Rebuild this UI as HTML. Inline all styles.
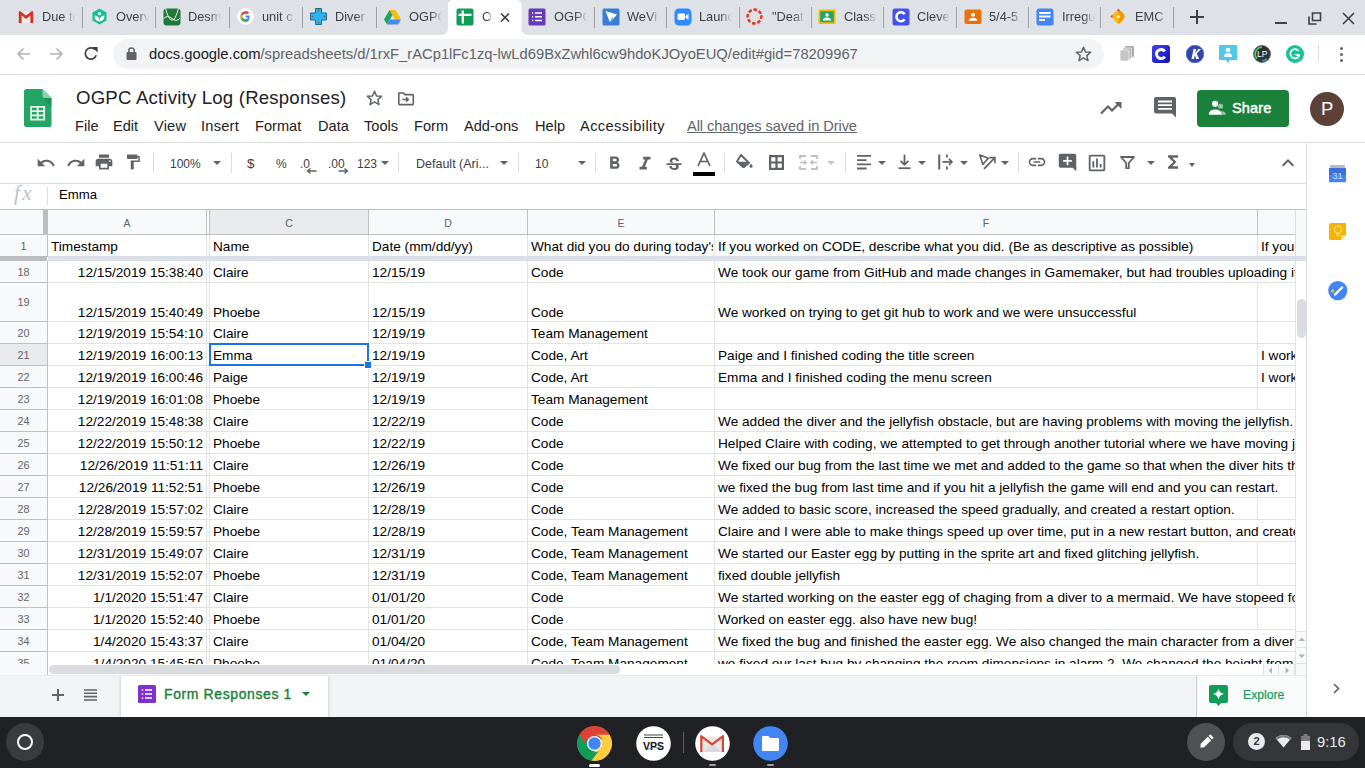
<!DOCTYPE html><html><head><meta charset="utf-8"><style>
html,body{-webkit-font-smoothing:antialiased;margin:0;padding:0;width:1365px;height:768px;overflow:hidden;background:#fff;font-family:"Liberation Sans",sans-serif}
body>div,body div{position:absolute}
svg{position:absolute}
</style></head><body>
<div style="left:0px;top:0px;width:1365px;height:35px;background:#dee1e6"></div>
<svg style="position:absolute;left:437px;top:0" width="95" height="36" viewBox="0 0 95 36"><path d="M3.5 35 Q11 35 11 28 V5.5 Q11 0 16.5 0 H79 Q84.5 0 84.5 5.5 V28 Q84.5 35 92 35 V36 H3.5 Z" fill="#fff"/></svg>
<div style="left:42px;top:8px;font:12.8px 'Liberation Sans',sans-serif;color:#3c4043;white-space:nowrap;width:34px;overflow:hidden;line-height:17px;-webkit-mask-image:linear-gradient(90deg,#000 62%,transparent 98%)">Due to</div>
<div style="left:82px;top:7px;width:1px;height:21px;background:#9aa0a6"></div>
<div style="left:116px;top:8px;font:12.8px 'Liberation Sans',sans-serif;color:#3c4043;white-space:nowrap;width:34px;overflow:hidden;line-height:17px;-webkit-mask-image:linear-gradient(90deg,#000 62%,transparent 98%)">Overv</div>
<div style="left:155px;top:7px;width:1px;height:21px;background:#9aa0a6"></div>
<div style="left:188px;top:8px;font:12.8px 'Liberation Sans',sans-serif;color:#3c4043;white-space:nowrap;width:34px;overflow:hidden;line-height:17px;-webkit-mask-image:linear-gradient(90deg,#000 62%,transparent 98%)">Desm</div>
<div style="left:229px;top:7px;width:1px;height:21px;background:#9aa0a6"></div>
<div style="left:262px;top:8px;font:12.8px 'Liberation Sans',sans-serif;color:#3c4043;white-space:nowrap;width:34px;overflow:hidden;line-height:17px;-webkit-mask-image:linear-gradient(90deg,#000 62%,transparent 98%)">unit c</div>
<div style="left:302px;top:7px;width:1px;height:21px;background:#9aa0a6"></div>
<div style="left:335px;top:8px;font:12.8px 'Liberation Sans',sans-serif;color:#3c4043;white-space:nowrap;width:34px;overflow:hidden;line-height:17px;-webkit-mask-image:linear-gradient(90deg,#000 62%,transparent 98%)">Diver</div>
<div style="left:376px;top:7px;width:1px;height:21px;background:#9aa0a6"></div>
<div style="left:409px;top:8px;font:12.8px 'Liberation Sans',sans-serif;color:#3c4043;white-space:nowrap;width:34px;overflow:hidden;line-height:17px;-webkit-mask-image:linear-gradient(90deg,#000 62%,transparent 98%)">OGPC</div>
<div style="left:554px;top:8px;font:12.8px 'Liberation Sans',sans-serif;color:#3c4043;white-space:nowrap;width:34px;overflow:hidden;line-height:17px;-webkit-mask-image:linear-gradient(90deg,#000 62%,transparent 98%)">OGPC</div>
<div style="left:594px;top:7px;width:1px;height:21px;background:#9aa0a6"></div>
<div style="left:627px;top:8px;font:12.8px 'Liberation Sans',sans-serif;color:#3c4043;white-space:nowrap;width:34px;overflow:hidden;line-height:17px;-webkit-mask-image:linear-gradient(90deg,#000 62%,transparent 98%)">WeVi</div>
<div style="left:666px;top:7px;width:1px;height:21px;background:#9aa0a6"></div>
<div style="left:699px;top:8px;font:12.8px 'Liberation Sans',sans-serif;color:#3c4043;white-space:nowrap;width:34px;overflow:hidden;line-height:17px;-webkit-mask-image:linear-gradient(90deg,#000 62%,transparent 98%)">Launc</div>
<div style="left:739px;top:7px;width:1px;height:21px;background:#9aa0a6"></div>
<div style="left:772px;top:8px;font:12.8px 'Liberation Sans',sans-serif;color:#3c4043;white-space:nowrap;width:34px;overflow:hidden;line-height:17px;-webkit-mask-image:linear-gradient(90deg,#000 62%,transparent 98%)">&quot;Deat</div>
<div style="left:811px;top:7px;width:1px;height:21px;background:#9aa0a6"></div>
<div style="left:844px;top:8px;font:12.8px 'Liberation Sans',sans-serif;color:#3c4043;white-space:nowrap;width:34px;overflow:hidden;line-height:17px;-webkit-mask-image:linear-gradient(90deg,#000 62%,transparent 98%)">Class</div>
<div style="left:883px;top:7px;width:1px;height:21px;background:#9aa0a6"></div>
<div style="left:917px;top:8px;font:12.8px 'Liberation Sans',sans-serif;color:#3c4043;white-space:nowrap;width:34px;overflow:hidden;line-height:17px;-webkit-mask-image:linear-gradient(90deg,#000 62%,transparent 98%)">Cleve</div>
<div style="left:956px;top:7px;width:1px;height:21px;background:#9aa0a6"></div>
<div style="left:989px;top:8px;font:12.8px 'Liberation Sans',sans-serif;color:#3c4043;white-space:nowrap;width:34px;overflow:hidden;line-height:17px;-webkit-mask-image:linear-gradient(90deg,#000 62%,transparent 98%)">5/4-5</div>
<div style="left:1028px;top:7px;width:1px;height:21px;background:#9aa0a6"></div>
<div style="left:1062px;top:8px;font:12.8px 'Liberation Sans',sans-serif;color:#3c4043;white-space:nowrap;width:34px;overflow:hidden;line-height:17px;-webkit-mask-image:linear-gradient(90deg,#000 62%,transparent 98%)">Irregu</div>
<div style="left:1100px;top:7px;width:1px;height:21px;background:#9aa0a6"></div>
<div style="left:1135px;top:8px;font:12.8px 'Liberation Sans',sans-serif;color:#3c4043;white-space:nowrap;width:34px;overflow:hidden;line-height:17px;-webkit-mask-image:linear-gradient(90deg,#000 62%,transparent 98%)">EMC</div>
<div style="left:1173px;top:7px;width:1px;height:21px;background:#9aa0a6"></div>
<svg style="position:absolute;left:18px;top:10px" width="18" height="18" viewBox="0 0 18 18"><path d="M1.5 2 H14.5 V13 H1.5 Z" fill="#eeeeee"/><path d="M0.8 2.3 Q0.8 1 2 1 L8 5.6 L14 1 Q15.2 1 15.2 2.3 V13 H12.4 V5.6 L8 8.9 L3.6 5.6 V13 H0.8 Z" fill="#d93025"/></svg>
<svg style="position:absolute;left:91px;top:8px" width="18" height="18" viewBox="0 0 18 18"><path d="M8.5 0.5 L15.5 4.5 V12.5 L8.5 16.5 L1.5 12.5 V4.5 Z" fill="#14bf96"/><circle cx="8.5" cy="5.6" r="1.6" fill="#fff"/><path d="M3.6 7.6 Q8.4 8 8.5 13.2 Q8.6 8 13.4 7.6 Q13.6 13 8.5 13.6 Q3.4 13 3.6 7.6 Z" fill="#fff"/></svg>
<svg style="position:absolute;left:163px;top:8px" width="18" height="18" viewBox="0 0 18 18"><rect x="0.5" y="0.5" width="17" height="17" rx="3" fill="#1f7a36"/><path d="M2.5 0.5 Q9 24 15.5 0.5" fill="none" stroke="#fff" stroke-width="0.9"/><path d="M0.8 10.5 Q4.5 6.5 9 10.5 Q13.5 14.5 17.2 10" fill="none" stroke="#fff" stroke-width="0.9"/></svg>
<svg style="position:absolute;left:237px;top:8px" width="18" height="18" viewBox="0 0 18 18"><circle cx="8.5" cy="8.5" r="8.3" fill="#fff"/><path d="M12.6 7.4 H8.6 V9.6 H10.9 Q10.4 11.5 8.5 11.6 A3.1 3.1 0 1 1 10.5 6.1 L12 4.6 A5.2 5.2 0 1 0 8.5 13.7 Q13.2 13.7 12.6 7.4 Z" fill="#4285f4"/><path d="M3.9 6.2 A5.2 5.2 0 0 1 12 4.6 L10.5 6.1 A3.1 3.1 0 0 0 5.7 7.3 Z" fill="#ea4335"/><path d="M3.9 6.2 L5.7 7.3 A3.1 3.1 0 0 0 5.7 9.7 L3.9 10.9 A5.2 5.2 0 0 1 3.9 6.2 Z" fill="#fbbc05"/><path d="M3.9 10.9 L5.7 9.7 A3.1 3.1 0 0 0 10.2 11.2 L11.8 12.5 A5.2 5.2 0 0 1 3.9 10.9 Z" fill="#34a853"/></svg>
<svg style="position:absolute;left:310px;top:8px" width="18" height="18" viewBox="0 0 18 18"><path d="M5.5 0.5 H11.5 V5 H16.5 V12 H11.5 V16.5 H5.5 V12 H0.5 V5 H5.5 Z" fill="#29b6f6" stroke="#0d6ea8" stroke-width="1"/><circle cx="8.5" cy="2.5" r="0.9" fill="#a0522d"/><circle cx="8.5" cy="14.5" r="0.9" fill="#a0522d"/><circle cx="2.5" cy="8.5" r="0.9" fill="#a0522d"/><circle cx="14.5" cy="8.5" r="0.9" fill="#a0522d"/></svg>
<svg style="position:absolute;left:384px;top:9px" width="18" height="18" viewBox="0 0 18 18"><path d="M5.5 1 H11.5 L17 10.5 H11 Z" fill="#fbbc04"/><path d="M5.5 1 L0 10.5 L3 15.5 L8.5 6 Z" fill="#1ea362"/><path d="M3 15.5 H14 L17 10.5 H6 Z" fill="#4688f4"/></svg>
<svg style="position:absolute;left:456px;top:8px" width="18" height="18" viewBox="0 0 18 18"><rect x="0.5" y="0.5" width="17" height="17" rx="2" fill="#0f9d58"/><path d="M2.5 6.8 H15.5 M6.8 2.5 V15.5" stroke="#fff" stroke-width="2.3"/></svg>
<svg style="position:absolute;left:528px;top:8px" width="18" height="18" viewBox="0 0 18 18"><rect x="0.5" y="0.5" width="17" height="17" rx="1.5" fill="#673ab7"/><path d="M7 5 H14 M7 8.7 H14 M7 12.4 H14" stroke="#fff" stroke-width="1.5"/><path d="M4 5 H5.2 M4 8.7 H5.2 M4 12.4 H5.2" stroke="#fff" stroke-width="1.5"/></svg>
<svg style="position:absolute;left:602px;top:8px" width="18" height="18" viewBox="0 0 18 18"><rect x="0.5" y="0.5" width="17" height="17" rx="1.5" fill="#3a7dd6"/><path d="M3.5 3 L15 6.5 L8 14.5 Z" fill="#fff"/><path d="M8 14.5 L11 9" stroke="#3a7dd6" stroke-width="0.8"/></svg>
<svg style="position:absolute;left:674px;top:8px" width="18" height="18" viewBox="0 0 18 18"><rect x="0.5" y="0.5" width="17" height="17" rx="4.5" fill="#2d8cff"/><rect x="3.5" y="5.5" width="7.5" height="6.5" rx="1.4" fill="#fff"/><path d="M11.5 8 L14.5 5.6 V12 L11.5 9.6 Z" fill="#fff"/></svg>
<svg style="position:absolute;left:746px;top:8px" width="18" height="18" viewBox="0 0 18 18"><circle cx="8.5" cy="8.5" r="6.9" fill="none" stroke="#ea3323" stroke-width="2.5" stroke-dasharray="3.6 1.82" transform="rotate(-10 8.5 8.5)"/></svg>
<svg style="position:absolute;left:818px;top:8px" width="18" height="18" viewBox="0 0 18 18"><rect x="0.5" y="1.5" width="17" height="14.5" rx="1" fill="#f9bb04"/><rect x="2.2" y="3.2" width="13.6" height="11" fill="#23a566"/><circle cx="9" cy="7" r="1.8" fill="#fff"/><path d="M4.8 12.5 Q5 9.6 9 9.6 Q13 9.6 13.2 12.5 Z" fill="#fff"/></svg>
<svg style="position:absolute;left:892px;top:8px" width="18" height="18" viewBox="0 0 18 18"><rect x="0.5" y="0.5" width="17" height="17" rx="2.5" fill="#4352ee"/><path d="M12.6 6.2 A4.5 4.5 0 1 0 12.6 11.3" fill="none" stroke="#fff" stroke-width="2.6"/></svg>
<svg style="position:absolute;left:964px;top:8px" width="18" height="18" viewBox="0 0 18 18"><rect x="0.5" y="1.5" width="17" height="14.5" rx="2" fill="#e8710a"/><circle cx="9" cy="6.7" r="2" fill="#fff"/><path d="M4.6 12.8 Q5 9.8 9 9.8 Q13 9.8 13.4 12.8 Z" fill="#fff"/></svg>
<svg style="position:absolute;left:1036px;top:8px" width="18" height="18" viewBox="0 0 18 18"><rect x="0.5" y="0.5" width="17" height="17" rx="2.5" fill="#4285f4"/><path d="M3 5 H14.5 M3 8.5 H14.5 M3 12 H9" stroke="#fff" stroke-width="1.8"/></svg>
<svg style="position:absolute;left:1110px;top:8px" width="18" height="18" viewBox="0 0 18 18"><path d="M8.5 2.7 A5.9 5.9 0 0 1 14.4 8.6 Q14.4 12 8.5 16 Q2.6 12 2.6 8.6 A5.9 5.9 0 0 1 8.5 2.7 Z" fill="#fbbc04"/><path d="M8.5 2.7 A5.9 5.9 0 0 1 14.4 8.6 Q14.4 12 8.5 16 Z" fill="#f29900"/><circle cx="8.5" cy="8.6" r="1.7" fill="#e8eaed"/><path d="M6.8 3 L8.5 0.6 L10.2 3 Z" fill="#ea4335"/><path d="M2.6 6.6 L0.3 8.4 L2.6 10.2 Z" fill="#ea4335"/></svg>
<div style="left:482px;top:8px;font:12.8px 'Liberation Sans',sans-serif;color:#3c4043;white-space:nowrap;width:10px;overflow:hidden;line-height:17px;-webkit-mask-image:linear-gradient(90deg,#000 55%,transparent)">OGPC</div>
<svg style="position:absolute;left:500px;top:13px" width="10" height="9" viewBox="0 0 10 9"><path d="M1 0.5 L9 8.5 M9 0.5 L1 8.5" stroke="#3c4043" stroke-width="1.6"/></svg>
<svg style="position:absolute;left:1190px;top:10px" width="14" height="14" viewBox="0 0 14 14"><path d="M7 0 V14 M0 7 H14" stroke="#3c4043" stroke-width="2"/></svg>
<div style="left:1275px;top:22px;width:12px;height:2px;background:#3c4043"></div>
<svg style="position:absolute;left:1308px;top:12px" width="14" height="13" viewBox="0 0 14 13"><path d="M4.5 1 H12.5 V8.5 H4.5 Z M1 4.5 V12 H8.5" fill="none" stroke="#3c4043" stroke-width="1.6"/></svg>
<svg style="position:absolute;left:1342px;top:12px" width="13" height="13" viewBox="0 0 13 13"><path d="M1 1 L12 12 M12 1 L1 12" stroke="#3c4043" stroke-width="1.6"/></svg>
<div style="left:0px;top:35px;width:1365px;height:40px;background:#fff"></div>
<div style="left:0px;top:74px;width:1365px;height:1px;background:#dadce0"></div>
<div style="left:113px;top:39px;width:991px;height:30px;background:#f1f3f4;border-radius:15px"></div>
<svg style="position:absolute;left:16px;top:47px" width="15" height="14" viewBox="0 0 15 14"><path d="M14 7 H2 M7.5 1.5 L2 7 L7.5 12.5" fill="none" stroke="#b1b3b6" stroke-width="1.7"/></svg>
<svg style="position:absolute;left:49px;top:47px" width="15" height="14" viewBox="0 0 15 14"><path d="M1 7 H13 M7.5 1.5 L13 7 L7.5 12.5" fill="none" stroke="#b1b3b6" stroke-width="1.7"/></svg>
<svg style="position:absolute;left:83px;top:46px" width="16" height="16" viewBox="0 0 16 16"><path d="M13.2 9.2 A5.6 5.6 0 1 1 11.9 3.6" fill="none" stroke="#3c4043" stroke-width="1.7"/><path d="M9.2 1 H14.6 V6.4 Z" fill="#3c4043"/></svg>
<svg style="position:absolute;left:126px;top:47px" width="11" height="13" viewBox="0 0 11 13"><rect x="0.5" y="5" width="10" height="8" rx="1" fill="#5f6368"/><path d="M2.8 5.5 V3.8 A2.7 2.7 0 0 1 8.2 3.8 V5.5" fill="none" stroke="#5f6368" stroke-width="1.5"/></svg>
<div style="left:149px;top:46px;font:14.75px 'Liberation Sans',sans-serif;color:#202124;white-space:nowrap;line-height:17px">docs.google.com<span style="color:#5f6368">/spreadsheets/d/1rxF_rACp1lFc1zq-lwLd69BxZwhl6cw9hdoKJOyoEUQ/edit#gid=78209967</span></div>
<svg style="position:absolute;left:1075px;top:46px" width="17" height="16" viewBox="0 0 17 16"><path d="M8.5 1.3 L10.6 6 L15.7 6.3 L11.8 9.6 L13 14.6 L8.5 11.9 L4 14.6 L5.2 9.6 L1.3 6.3 L6.4 6 Z" fill="none" stroke="#5f6368" stroke-width="1.5" stroke-linejoin="round"/></svg>
<svg style="position:absolute;left:1119px;top:45px" width="17" height="17" viewBox="0 0 17 17"><rect x="6" y="1" width="9" height="11" rx="1" fill="#a8a8a8"/><rect x="3.5" y="3" width="9" height="11" rx="1" fill="#b8b8b8" stroke="#fff" stroke-width="0.6"/><rect x="1" y="5" width="9" height="11" rx="1" fill="#c6c6c6" stroke="#fff" stroke-width="0.6"/></svg>
<svg style="position:absolute;left:1152px;top:45px" width="18" height="18" viewBox="0 0 18 18"><defs><linearGradient id="gc" x1="0" y1="0" x2="1" y2="1"><stop offset="0" stop-color="#4343f0"/><stop offset="1" stop-color="#1010b8"/></linearGradient></defs><rect x="0" y="0" width="18" height="18" rx="3" fill="url(#gc)"/><path d="M12.8 6.3 A4.6 4.6 0 1 0 12.8 11.7" fill="none" stroke="#fff" stroke-width="3"/></svg>
<svg style="position:absolute;left:1186px;top:45px" width="18" height="18" viewBox="0 0 18 18"><circle cx="9" cy="9" r="8.8" fill="#3446a8"/><circle cx="9" cy="9" r="8.8" fill="none" stroke="#5566c8" stroke-width="0.8"/><path d="M5.5 14 L7.6 4 H10 L9.2 8 L12.4 4 H15 L10.8 8.6 L13 14 H10.3 L8.8 10.2 L8 14 Z" fill="#fff"/></svg>
<svg style="position:absolute;left:1219px;top:45px" width="18" height="19" viewBox="0 0 18 19"><path d="M1 0 H17 Q18 0 18 1 V14 Q18 15 17 15 H11 L9 18 L7 15 H1 Q0 15 0 14 V1 Q0 0 1 0 Z" fill="#4fc8ea"/><circle cx="9" cy="5" r="2.3" fill="#fff"/><path d="M5 12 Q5 8 9 8 Q13 8 13 12 Z" fill="#fff"/></svg>
<svg style="position:absolute;left:1253px;top:45px" width="18" height="18" viewBox="0 0 18 18"><circle cx="9" cy="9" r="8.5" fill="#2f3336" stroke="#5f6368" stroke-width="0.8"/><path d="M9 2.2 A6.8 6.8 0 0 0 4.2 13.8" fill="none" stroke="#3ddc5c" stroke-width="1.6"/><path d="M13.8 13.8 A6.8 6.8 0 0 1 9 15.8" fill="none" stroke="#2a9fd6" stroke-width="1.6"/><text x="9.3" y="12.2" font-family="Liberation Sans" font-size="8.5" fill="#fff" text-anchor="middle">LP</text></svg>
<svg style="position:absolute;left:1286px;top:45px" width="18" height="18" viewBox="0 0 18 18"><circle cx="9" cy="9" r="9" fill="#15c39a"/><path d="M12.6 6 A4.6 4.6 0 1 0 13 11 L11 9.8 H13.6" fill="none" stroke="#fff" stroke-width="1.7"/></svg>
<div style="left:1318px;top:45px;width:1px;height:17px;background:#dadce0"></div>
<div style="left:1340px;top:47px;width:3px;height:3px;background:#5f6368;border-radius:50%"></div>
<div style="left:1340px;top:53px;width:3px;height:3px;background:#5f6368;border-radius:50%"></div>
<div style="left:1340px;top:59px;width:3px;height:3px;background:#5f6368;border-radius:50%"></div>
<div style="left:0px;top:75px;width:1365px;height:68px;background:#fff"></div>
<div style="left:0px;top:142px;width:1365px;height:1px;background:#dadce0"></div>
<div style="left:76px;top:87px;font:18.6px 'Liberation Sans',sans-serif;color:#202124;white-space:nowrap;line-height:22px;letter-spacing:0.2px">OGPC Activity Log (Responses)</div>
<div style="left:75px;top:118px;font:14.6px 'Liberation Sans',sans-serif;color:#202124;white-space:nowrap;line-height:17px;letter-spacing:0px">File</div>
<div style="left:113px;top:118px;font:14.6px 'Liberation Sans',sans-serif;color:#202124;white-space:nowrap;line-height:17px;letter-spacing:0px">Edit</div>
<div style="left:154px;top:118px;font:14.6px 'Liberation Sans',sans-serif;color:#202124;white-space:nowrap;line-height:17px;letter-spacing:0.2px">View</div>
<div style="left:201px;top:118px;font:14.6px 'Liberation Sans',sans-serif;color:#202124;white-space:nowrap;line-height:17px;letter-spacing:0.25px">Insert</div>
<div style="left:255px;top:118px;font:14.6px 'Liberation Sans',sans-serif;color:#202124;white-space:nowrap;line-height:17px;letter-spacing:0px">Format</div>
<div style="left:318px;top:118px;font:14.6px 'Liberation Sans',sans-serif;color:#202124;white-space:nowrap;line-height:17px;letter-spacing:0px">Data</div>
<div style="left:364px;top:118px;font:14.6px 'Liberation Sans',sans-serif;color:#202124;white-space:nowrap;line-height:17px;letter-spacing:0px">Tools</div>
<div style="left:414px;top:118px;font:14.6px 'Liberation Sans',sans-serif;color:#202124;white-space:nowrap;line-height:17px;letter-spacing:0px">Form</div>
<div style="left:464px;top:118px;font:14.6px 'Liberation Sans',sans-serif;color:#202124;white-space:nowrap;line-height:17px;letter-spacing:0px">Add-ons</div>
<div style="left:535px;top:118px;font:14.6px 'Liberation Sans',sans-serif;color:#202124;white-space:nowrap;line-height:17px;letter-spacing:0px">Help</div>
<div style="left:580px;top:118px;font:14.6px 'Liberation Sans',sans-serif;color:#202124;white-space:nowrap;line-height:17px;letter-spacing:0.42px">Accessibility</div>
<div style="left:687px;top:118px;font:14.6px 'Liberation Sans',sans-serif;color:#5f6368;white-space:nowrap;line-height:17px;text-decoration:underline;letter-spacing:-0.08px">All changes saved in Drive</div>
<div style="left:1197px;top:90px;width:92px;height:37px;background:#1a803a;border-radius:4px"></div>
<div style="left:1232px;top:100px;font:14.6px 'Liberation Sans',sans-serif;color:#fff;white-space:nowrap;line-height:17px;-webkit-text-stroke:0.45px #fff;letter-spacing:0.1px">Share</div>
<div style="left:1310px;top:92px;width:34px;height:34px;background:#5d4037;border-radius:50%"></div>
<div style="left:1321px;top:99px;font:18.5px 'Liberation Sans',sans-serif;color:#fff;line-height:20px">P</div>
<div style="left:0px;top:143px;width:1306px;height:40px;background:#fff"></div>
<div style="left:0px;top:183px;width:1306px;height:1px;background:#dadce0"></div>
<div style="left:153px;top:153px;width:1px;height:20px;background:#dadce0"></div>
<div style="left:231px;top:153px;width:1px;height:20px;background:#dadce0"></div>
<div style="left:398px;top:153px;width:1px;height:20px;background:#dadce0"></div>
<div style="left:518px;top:153px;width:1px;height:20px;background:#dadce0"></div>
<div style="left:595px;top:153px;width:1px;height:20px;background:#dadce0"></div>
<div style="left:724px;top:153px;width:1px;height:20px;background:#dadce0"></div>
<div style="left:845px;top:153px;width:1px;height:20px;background:#dadce0"></div>
<div style="left:1018px;top:153px;width:1px;height:20px;background:#dadce0"></div>
<div style="left:170px;top:156px;font:12px 'Liberation Sans',sans-serif;color:#3c4043;line-height:16px">100%</div>
<div style="left:247px;top:156px;font:13.5px 'Liberation Sans',sans-serif;color:#3c4043;line-height:16px">$</div>
<div style="left:276px;top:156px;font:12px 'Liberation Sans',sans-serif;color:#3c4043;line-height:16px">%</div>
<div style="left:300px;top:156px;font:12px 'Liberation Sans',sans-serif;color:#3c4043;line-height:16px">.0</div>
<div style="left:328px;top:156px;font:12px 'Liberation Sans',sans-serif;color:#3c4043;line-height:16px">.00</div>
<div style="left:357px;top:156px;font:12px 'Liberation Sans',sans-serif;color:#3c4043;line-height:16px">123</div>
<div style="left:416px;top:156px;font:12.5px 'Liberation Sans',sans-serif;color:#3c4043;line-height:16px">Default (Ari...</div>
<div style="left:535px;top:156px;font:12px 'Liberation Sans',sans-serif;color:#3c4043;line-height:16px">10</div>
<svg style="position:absolute;left:213px;top:161px" width="8" height="4" viewBox="0 0 8 4"><path d="M0 0 H8 L4.0 4 Z" fill="#5f6368"/></svg>
<svg style="position:absolute;left:381px;top:161px" width="8" height="4" viewBox="0 0 8 4"><path d="M0 0 H8 L4.0 4 Z" fill="#5f6368"/></svg>
<svg style="position:absolute;left:500px;top:161px" width="8" height="4" viewBox="0 0 8 4"><path d="M0 0 H8 L4.0 4 Z" fill="#5f6368"/></svg>
<svg style="position:absolute;left:578px;top:161px" width="8" height="4" viewBox="0 0 8 4"><path d="M0 0 H8 L4.0 4 Z" fill="#5f6368"/></svg>
<svg style="position:absolute;left:878px;top:161px" width="8" height="4" viewBox="0 0 8 4"><path d="M0 0 H8 L4.0 4 Z" fill="#5f6368"/></svg>
<svg style="position:absolute;left:918px;top:161px" width="8" height="4" viewBox="0 0 8 4"><path d="M0 0 H8 L4.0 4 Z" fill="#5f6368"/></svg>
<svg style="position:absolute;left:960px;top:161px" width="8" height="4" viewBox="0 0 8 4"><path d="M0 0 H8 L4.0 4 Z" fill="#5f6368"/></svg>
<svg style="position:absolute;left:1001px;top:161px" width="8" height="4" viewBox="0 0 8 4"><path d="M0 0 H8 L4.0 4 Z" fill="#5f6368"/></svg>
<svg style="position:absolute;left:1147px;top:161px" width="8" height="4" viewBox="0 0 8 4"><path d="M0 0 H8 L4.0 4 Z" fill="#5f6368"/></svg>
<svg style="position:absolute;left:827px;top:161px" width="8" height="4" viewBox="0 0 8 4"><path d="M0 0 H8 L4.0 4 Z" fill="#c4c7c5"/></svg>
<svg style="position:absolute;left:1189px;top:163px" width="6" height="4" viewBox="0 0 6 4"><path d="M0 0 H6 L3.0 4 Z" fill="#5f6368"/></svg>
<svg style="position:absolute;left:24px;top:89px" width="28" height="38" viewBox="0 0 28 38"><path d="M2.5 0 H18.5 L27.5 9 V35.5 Q27.5 38 25 38 H2.5 Q0 38 0 35.5 V2.5 Q0 0 2.5 0 Z" fill="#23a566"/><path d="M18.5 0 L27.5 9 H20.5 Q18.5 9 18.5 7 Z" fill="#8ed1b1"/><path d="M18.5 9 L27.5 18 V9 Z" fill="#1c8b55" opacity="0.6"/><path d="M6.2 17 H21.1 V31.5 H6.2 Z M8 18.8 V21.2 H12.75 V18.8 Z M14.55 18.8 V21.2 H19.3 V18.8 Z M8 23 V25.4 H12.75 V23 Z M14.55 23 V25.4 H19.3 V23 Z M8 27.2 V29.7 H12.75 V27.2 Z M14.55 27.2 V29.7 H19.3 V27.2 Z" fill="#f1f1f1" fill-rule="evenodd"/></svg>
<svg style="position:absolute;left:366px;top:90px" width="17" height="16" viewBox="0 0 17 16"><path d="M8.5 1.3 L10.6 6 L15.7 6.3 L11.8 9.6 L13 14.6 L8.5 11.9 L4 14.6 L5.2 9.6 L1.3 6.3 L6.4 6 Z" fill="none" stroke="#5f6368" stroke-width="1.5" stroke-linejoin="round"/></svg>
<svg style="position:absolute;left:397px;top:91px" width="18" height="15" viewBox="0 0 18 15"><path d="M1.8 2 H6.5 L8 3.6 H15.5 Q16.3 3.6 16.3 4.4 V12.8 Q16.3 13.6 15.5 13.6 H2.6 Q1.8 13.6 1.8 12.8 Z" fill="none" stroke="#5f6368" stroke-width="1.6"/><path d="M5.5 8.6 H11 M9 6.4 L11.3 8.6 L9 10.8" fill="none" stroke="#5f6368" stroke-width="1.5"/></svg>
<svg style="position:absolute;left:1100px;top:101px" width="23" height="14" viewBox="0 0 23 14"><path d="M1 12.5 L8 5.5 L12 9.5 L19.5 2" fill="none" stroke="#5f6368" stroke-width="2.2"/><path d="M14.5 1 H21.5 V8 Z" fill="#5f6368"/></svg>
<svg style="position:absolute;left:1154px;top:97px" width="22" height="21" viewBox="0 0 22 21"><path d="M2 0 H20 Q22 0 22 2 V20.5 L18 16.5 H2 Q0 16.5 0 14.5 V2 Q0 0 2 0 Z" fill="#5f6368"/><path d="M4 4.5 H18 M4 8.2 H18 M4 11.9 H18" stroke="#fff" stroke-width="1.8"/></svg>
<svg style="position:absolute;left:1207px;top:100px" width="20" height="16" viewBox="0 0 20 16"><circle cx="13.6" cy="6.3" r="2.5" fill="#fff" opacity="0.55"/><path d="M12 11 Q18.8 10.8 19.2 14.8 H13.5 Z" fill="#fff" opacity="0.55"/><circle cx="8.1" cy="3.8" r="3.1" fill="#fff"/><path d="M1.8 14.8 Q1.8 9.4 8.1 9.4 Q14.4 9.4 14.4 14.8 Z" fill="#fff"/></svg>
<svg style="position:absolute;left:36px;top:153px" width="20" height="20" viewBox="0 0 24 24"><path d="M12.5 8c-2.65 0-5.05.99-6.9 2.6L2 7v9h9l-3.62-3.62c1.39-1.16 3.16-1.88 5.12-1.88 3.54 0 6.55 2.31 7.6 5.5l2.37-.78C21.08 11.03 17.15 8 12.5 8z" fill="#5f6368"/></svg>
<svg style="position:absolute;left:66px;top:153px" width="20" height="20" viewBox="0 0 24 24"><path d="M18.4 10.6C16.55 8.99 14.15 8 11.5 8c-4.65 0-8.58 3.03-9.96 7.22L3.9 16c1.05-3.19 4.05-5.5 7.6-5.5 1.95 0 3.73.72 5.12 1.88L13 16h9V7l-3.6 3.6z" fill="#5f6368"/></svg>
<svg style="position:absolute;left:94px;top:152px" width="20" height="20" viewBox="0 0 24 24"><path d="M19 8H5c-1.66 0-3 1.34-3 3v6h4v4h12v-4h4v-6c0-1.66-1.34-3-3-3zm-3 11H8v-5h8v5zm3-7c-.55 0-1-.45-1-1s.45-1 1-1 1 .45 1 1-.45 1-1 1zm-1-9H6v4h12V3z" fill="#5f6368"/></svg>
<svg style="position:absolute;left:124px;top:153px" width="18" height="18" viewBox="0 0 24 24"><path d="M18 4V3c0-.55-.45-1-1-1H5c-.55 0-1 .45-1 1v4c0 .55.45 1 1 1h12c.55 0 1-.45 1-1V6h1v4H9v11c0 .55.45 1 1 1h2c.55 0 1-.45 1-1v-9h8V4h-3z" fill="#5f6368"/></svg>
<svg style="position:absolute;left:604px;top:153px" width="21" height="21" viewBox="0 0 24 24"><path d="M15.6 10.79c.97-.67 1.65-1.77 1.65-2.79 0-2.26-1.75-4-4-4H7v14h7.04c2.09 0 3.71-1.7 3.71-3.79 0-1.52-.86-2.82-2.15-3.42zM10 6.5h3c.83 0 1.5.67 1.5 1.5s-.67 1.5-1.5 1.5h-3v-3zm3.5 9H10v-3h3.5c.83 0 1.5.67 1.5 1.5s-.67 1.5-1.5 1.5z" fill="#5f6368"/></svg>
<svg style="position:absolute;left:634px;top:153px" width="22" height="22" viewBox="0 0 24 24"><path d="M10 4v3h2.21l-3.42 8H6v3h8v-3h-2.21l3.42-8H18V4z" fill="#5f6368"/></svg>
<svg style="position:absolute;left:664px;top:155px" width="20" height="20" viewBox="0 0 24 24"><path d="M6.85 7.08C6.85 4.37 9.45 3 12.24 3c1.64 0 3 .49 3.9 1.28.77.65 1.46 1.73 1.46 3.24h-3.01c0-.31-.05-.59-.15-.85-.29-.86-1.2-1.28-2.25-1.28-1.86 0-2.34 1.02-2.34 1.7 0 .48.25.88.74 1.21.38.25.77.48 1.41.7H7.39c-.21-.34-.54-.89-.54-1.92zM21 12v-2H3v2h9.62c1.15.45 1.96.75 1.96 1.97 0 1-.81 1.67-2.28 1.67-1.54 0-2.93-.54-2.93-2.51H6.4c0 .55.08 1.13.24 1.58.81 2.29 3.29 3.3 5.67 3.3 2.27 0 5.3-.89 5.3-4.05 0-.3-.01-1.16-.48-1.94H21V12z" fill="#5f6368"/></svg>
<svg style="position:absolute;left:697px;top:152px" width="14" height="15" viewBox="0 0 14 15"><path d="M1 14 L7 1.2 L13 14 M3.3 9.5 H10.7" fill="none" stroke="#5f6368" stroke-width="1.7"/></svg>
<div style="left:693px;top:172px;width:22px;height:4px;background:#000"></div>
<svg style="position:absolute;left:736px;top:154px" width="17" height="14" viewBox="0 0 17 14"><path d="M5 1 L13 9 L7.5 13.5 L1 7.5 Z" fill="none" stroke="#5f6368" stroke-width="1.8" stroke-linejoin="round"/><path d="M1.5 7.8 H12.6 L7.5 13 Z" fill="#5f6368"/><path d="M15 9.5 Q16.5 11.5 16.5 12.2 A1.5 1.5 0 0 1 13.5 12.2 Q13.5 11.5 15 9.5 Z" fill="#5f6368"/></svg>
<svg style="position:absolute;left:769px;top:155px" width="15" height="15" viewBox="0 0 15 15"><path d="M1.1 1.1 H13.9 V13.9 H1.1 Z M7.5 1 V14 M1 7.5 H14" fill="none" stroke="#5f6368" stroke-width="2.2"/></svg>
<svg style="position:absolute;left:799px;top:155px" width="19" height="15" viewBox="0 0 19 15"><path d="M1 4 V1 H7 M12 1 H18 V4 M1 11 V14 H7 M12 14 H18 V11" fill="none" stroke="#bdc1c6" stroke-width="1.8"/><path d="M1 7.5 H7 M5 5.5 L7.2 7.5 L5 9.5 M18 7.5 H12 M14 5.5 L11.8 7.5 L14 9.5" fill="none" stroke="#bdc1c6" stroke-width="1.6"/></svg>
<svg style="position:absolute;left:857px;top:154px" width="15" height="16" viewBox="0 0 15 16"><path d="M0 1.9 H14 M0 6.1 H9.6 M0 10.3 H14 M0 14.5 H9.6" stroke="#5f6368" stroke-width="1.8"/></svg>
<svg style="position:absolute;left:898px;top:154px" width="13" height="16" viewBox="0 0 13 16"><path d="M6.5 0.5 V10.5" stroke="#5f6368" stroke-width="1.8"/><path d="M2.6 6.8 L6.5 10.7 L10.4 6.8" fill="none" stroke="#5f6368" stroke-width="1.8"/><path d="M0.5 14.2 H12.5" stroke="#5f6368" stroke-width="1.8"/></svg>
<svg style="position:absolute;left:938px;top:154px" width="15" height="16" viewBox="0 0 15 16"><path d="M1.2 0.5 V15.5" stroke="#5f6368" stroke-width="2"/><path d="M8.9 0.5 V3.6 M8.9 12.4 V15.5" stroke="#5f6368" stroke-width="1.8"/><path d="M4.4 7.9 H14 M11 4.9 L14 7.9 L11 10.9" fill="none" stroke="#5f6368" stroke-width="1.7"/></svg>
<svg style="position:absolute;left:979px;top:154px" width="17" height="16" viewBox="0 0 17 16"><path d="M0.8 1 L9.3 4.3 L3.8 10.4 Z" fill="none" stroke="#5f6368" stroke-width="1.6" stroke-linejoin="round"/><path d="M5 14.8 L15.2 4.3" stroke="#5f6368" stroke-width="1.8"/><path d="M10.3 3.6 H15.9 V9.2" fill="none" stroke="#5f6368" stroke-width="1.6"/></svg>
<svg style="position:absolute;left:1027px;top:152px" width="20" height="20" viewBox="0 0 24 24"><path d="M3.9 12c0-1.71 1.39-3.1 3.1-3.1h4V7H7c-2.76 0-5 2.24-5 5s2.24 5 5 5h4v-1.9H7c-1.71 0-3.1-1.39-3.1-3.1zM8 13h8v-2H8v2zm9-6h-4v1.9h4c1.71 0 3.1 1.39 3.1 3.1s-1.39 3.1-3.1 3.1h-4V17h4c2.76 0 5-2.24 5-5s-2.24-5-5-5z" fill="#5f6368"/></svg>
<svg style="position:absolute;left:1057px;top:152px" width="21" height="21" viewBox="0 0 24 24"><path d="M22 4c0-1.1-.9-2-2-2H4c-1.1 0-1.99.9-1.99 2L2 16c0 1.1.9 2 2 2h14l4 4-.01-18zM17 11h-4v4h-2v-4H7V9h4V5h2v4h4v2z" fill="#5f6368"/></svg>
<svg style="position:absolute;left:1086px;top:152px" width="22" height="22" viewBox="0 0 24 24"><path d="M9 17H7v-7h2v7zm4 0h-2V7h2v10zm4 0h-2v-4h2v4zm2 2H5V5h14v14.1V19zm0-16H5c-1.1 0-2 .9-2 2v14c0 1.1.9 2 2 2h14c1.1 0 2-.9 2-2V5c0-1.1-.9-2-2-2z" fill="#5f6368"/></svg>
<svg style="position:absolute;left:1120px;top:156px" width="15" height="13" viewBox="0 0 15 13"><path d="M1 1 H14 L8.8 7 V12.5 H6.2 V7 Z" fill="none" stroke="#5f6368" stroke-width="1.8" stroke-linejoin="round"/></svg>
<svg style="position:absolute;left:1163px;top:152px" width="20" height="20" viewBox="0 0 24 24"><path d="M18 4H6v2l6.5 6L6 18v2h12v-3h-7l5-5-5-5h7z" fill="#5f6368"/></svg>
<svg style="position:absolute;left:1276px;top:151px" width="24" height="24" viewBox="0 0 24 24"><path d="M7.41 15.41L12 10.83l4.59 4.58L18 14l-6-6-6 6z" fill="#5f6368"/></svg>
<svg style="position:absolute;left:306px;top:168px" width="11" height="6" viewBox="0 0 11 6"><path d="M10.5 3 H2 M4.5 0.5 L1.5 3 L4.5 5.5" fill="none" stroke="#5f6368" stroke-width="1.4"/></svg>
<svg style="position:absolute;left:338px;top:168px" width="11" height="6" viewBox="0 0 11 6"><path d="M0.5 3 H9 M6.5 0.5 L9.5 3 L6.5 5.5" fill="none" stroke="#5f6368" stroke-width="1.4"/></svg>
<div style="left:0px;top:184px;width:1306px;height:25px;background:#fff"></div>
<div style="left:14px;top:181px;font:italic 21px 'Liberation Serif',serif;color:#bdc1c6;line-height:24px;letter-spacing:2.5px">fx</div>
<div style="left:47px;top:187px;width:1px;height:18px;background:#dadce0"></div>
<div style="left:59px;top:187px;font:13.2px 'Liberation Sans',sans-serif;color:#000;line-height:16px">Emma</div>
<div style="left:1306px;top:142px;width:1px;height:575px;background:#dadce0"></div>
<div style="left:1307px;top:143px;width:58px;height:574px;background:#fff"></div>
<div style="left:0;top:209px;width:1306px;height:455px;background:#fff;overflow:hidden">
<div style="left:0px;top:0px;width:1306px;height:1px;background:#c0c0c0"></div>
<div style="left:0px;top:1px;width:47px;height:25px;background:#f8f9fa"></div>
<div style="left:48px;top:1px;width:1248px;height:25px;background:#f8f9fa"></div>
<div style="left:210px;top:1px;width:158px;height:25px;background:#e8eaed"></div>
<div style="left:0px;top:25px;width:1296px;height:1px;background:#c0c0c0"></div>
<div style="left:43px;top:1px;width:4px;height:24px;background:#bdbdbd"></div>
<div style="left:47px;top:1px;width:1px;height:25px;background:#c0c0c0"></div>
<div style="left:206px;top:1px;width:1px;height:25px;background:#c0c0c0"></div>
<div style="left:209px;top:1px;width:1px;height:25px;background:#c0c0c0"></div>
<div style="left:368px;top:1px;width:1px;height:25px;background:#c0c0c0"></div>
<div style="left:527px;top:1px;width:1px;height:25px;background:#c0c0c0"></div>
<div style="left:714px;top:1px;width:1px;height:25px;background:#c0c0c0"></div>
<div style="left:1257px;top:1px;width:1px;height:25px;background:#c0c0c0"></div>
<div style="left:48px;top:8px;font:10.5px 'Liberation Sans',sans-serif;color:#5f6368;width:158px;text-align:center;line-height:12px">A</div>
<div style="left:210px;top:8px;font:10.5px 'Liberation Sans',sans-serif;color:#5f6368;width:158px;text-align:center;line-height:12px">C</div>
<div style="left:369px;top:8px;font:10.5px 'Liberation Sans',sans-serif;color:#5f6368;width:158px;text-align:center;line-height:12px">D</div>
<div style="left:528px;top:8px;font:10.5px 'Liberation Sans',sans-serif;color:#5f6368;width:186px;text-align:center;line-height:12px">E</div>
<div style="left:715px;top:8px;font:10.5px 'Liberation Sans',sans-serif;color:#5f6368;width:542px;text-align:center;line-height:12px">F</div>
<div style="left:0px;top:26px;width:47px;height:21px;background:#f8f9fa"></div>
<div style="left:0px;top:31px;font:10.8px 'Liberation Sans',sans-serif;color:#5f6368;width:47px;text-align:center;line-height:12px">1</div>
<div style="left:0px;top:47px;width:47px;height:5px;background:#bdbdbd"></div>
<div style="left:48px;top:47px;width:1258px;height:5px;background:#dadfe8"></div>
<div style="left:47px;top:26px;width:1px;height:22px;background:#c0c0c0"></div>
<div style="left:206px;top:26px;width:1px;height:21px;background:#e2e3e3"></div>
<div style="left:209px;top:26px;width:1px;height:21px;background:#e2e3e3"></div>
<div style="left:368px;top:26px;width:1px;height:21px;background:#e2e3e3"></div>
<div style="left:527px;top:26px;width:1px;height:21px;background:#e2e3e3"></div>
<div style="left:714px;top:26px;width:1px;height:21px;background:#e2e3e3"></div>
<div style="left:1257px;top:26px;width:1px;height:21px;background:#e2e3e3"></div>
<div style="left:1295px;top:26px;width:1px;height:22px;background:#e2e3e3"></div>
<div style="left:51px;top:30px;font:13.65px 'Liberation Sans',sans-serif;color:#000;white-space:nowrap;line-height:16px">Timestamp</div>
<div style="left:213px;top:30px;font:13.65px 'Liberation Sans',sans-serif;color:#000;white-space:nowrap;line-height:16px">Name</div>
<div style="left:372px;top:30px;font:13.65px 'Liberation Sans',sans-serif;color:#000;white-space:nowrap;line-height:16px">Date (mm/dd/yy)</div>
<div style="left:531px;top:30px;font:13.65px 'Liberation Sans',sans-serif;color:#000;white-space:nowrap;line-height:16px;width:182px;overflow:hidden">What did you do during today&#x27;s</div>
<div style="left:718px;top:30px;font:13.65px 'Liberation Sans',sans-serif;color:#000;white-space:nowrap;line-height:16px;width:538px;overflow:hidden">If you worked on CODE, describe what you did. (Be as descriptive as possible)</div>
<div style="left:1261px;top:30px;font:13.65px 'Liberation Sans',sans-serif;color:#000;white-space:nowrap;line-height:16px;width:34px;overflow:hidden">If you</div>
<div style="left:0px;top:52px;width:47px;height:21px;background:#f8f9fa"></div>
<div style="left:0px;top:57px;font:10.8px 'Liberation Sans',sans-serif;color:#5f6368;width:47px;text-align:center;line-height:12px">18</div>
<div style="left:0px;top:73px;width:47px;height:1px;background:#c0c0c0"></div>
<div style="left:48px;top:73px;width:1248px;height:1px;background:#e2e3e3"></div>
<div style="left:47px;top:52px;width:1px;height:22px;background:#c0c0c0"></div>
<div style="left:206px;top:52px;width:1px;height:21px;background:#e2e3e3"></div>
<div style="left:209px;top:52px;width:1px;height:21px;background:#e2e3e3"></div>
<div style="left:368px;top:52px;width:1px;height:21px;background:#e2e3e3"></div>
<div style="left:527px;top:52px;width:1px;height:21px;background:#e2e3e3"></div>
<div style="left:714px;top:52px;width:1px;height:21px;background:#e2e3e3"></div>
<div style="left:1295px;top:52px;width:1px;height:22px;background:#e2e3e3"></div>
<div style="left:48px;top:56px;font:13.65px 'Liberation Sans',sans-serif;color:#000;white-space:nowrap;line-height:16px;width:155px;text-align:right">12/15/2019 15:38:40</div>
<div style="left:213px;top:56px;font:13.65px 'Liberation Sans',sans-serif;color:#000;white-space:nowrap;line-height:16px">Claire</div>
<div style="left:372px;top:56px;font:13.65px 'Liberation Sans',sans-serif;color:#000;white-space:nowrap;line-height:16px">12/15/19</div>
<div style="left:531px;top:56px;font:13.65px 'Liberation Sans',sans-serif;color:#000;white-space:nowrap;line-height:16px;width:182px;overflow:hidden">Code</div>
<div style="left:718px;top:56px;font:13.65px 'Liberation Sans',sans-serif;color:#000;white-space:nowrap;line-height:16px;width:577px;overflow:hidden">We took our game from GitHub and made changes in Gamemaker, but had troubles uploading it</div>
<div style="left:0px;top:74px;width:47px;height:38px;background:#f8f9fa"></div>
<div style="left:0px;top:87px;font:10.8px 'Liberation Sans',sans-serif;color:#5f6368;width:47px;text-align:center;line-height:12px">19</div>
<div style="left:0px;top:112px;width:47px;height:1px;background:#c0c0c0"></div>
<div style="left:48px;top:112px;width:1248px;height:1px;background:#e2e3e3"></div>
<div style="left:47px;top:74px;width:1px;height:39px;background:#c0c0c0"></div>
<div style="left:206px;top:74px;width:1px;height:38px;background:#e2e3e3"></div>
<div style="left:209px;top:74px;width:1px;height:38px;background:#e2e3e3"></div>
<div style="left:368px;top:74px;width:1px;height:38px;background:#e2e3e3"></div>
<div style="left:527px;top:74px;width:1px;height:38px;background:#e2e3e3"></div>
<div style="left:714px;top:74px;width:1px;height:38px;background:#e2e3e3"></div>
<div style="left:1257px;top:74px;width:1px;height:38px;background:#e2e3e3"></div>
<div style="left:1295px;top:74px;width:1px;height:39px;background:#e2e3e3"></div>
<div style="left:48px;top:96px;font:13.65px 'Liberation Sans',sans-serif;color:#000;white-space:nowrap;line-height:16px;width:155px;text-align:right">12/15/2019 15:40:49</div>
<div style="left:213px;top:96px;font:13.65px 'Liberation Sans',sans-serif;color:#000;white-space:nowrap;line-height:16px">Phoebe</div>
<div style="left:372px;top:96px;font:13.65px 'Liberation Sans',sans-serif;color:#000;white-space:nowrap;line-height:16px">12/15/19</div>
<div style="left:531px;top:96px;font:13.65px 'Liberation Sans',sans-serif;color:#000;white-space:nowrap;line-height:16px;width:182px;overflow:hidden">Code</div>
<div style="left:718px;top:96px;font:13.65px 'Liberation Sans',sans-serif;color:#000;white-space:nowrap;line-height:16px;width:538px;overflow:hidden">We worked on trying to get git hub to work and we were unsuccessful</div>
<div style="left:0px;top:113px;width:47px;height:21px;background:#f8f9fa"></div>
<div style="left:0px;top:118px;font:10.8px 'Liberation Sans',sans-serif;color:#5f6368;width:47px;text-align:center;line-height:12px">20</div>
<div style="left:0px;top:134px;width:47px;height:1px;background:#c0c0c0"></div>
<div style="left:48px;top:134px;width:1248px;height:1px;background:#e2e3e3"></div>
<div style="left:47px;top:113px;width:1px;height:22px;background:#c0c0c0"></div>
<div style="left:206px;top:113px;width:1px;height:21px;background:#e2e3e3"></div>
<div style="left:209px;top:113px;width:1px;height:21px;background:#e2e3e3"></div>
<div style="left:368px;top:113px;width:1px;height:21px;background:#e2e3e3"></div>
<div style="left:527px;top:113px;width:1px;height:21px;background:#e2e3e3"></div>
<div style="left:714px;top:113px;width:1px;height:21px;background:#e2e3e3"></div>
<div style="left:1257px;top:113px;width:1px;height:21px;background:#e2e3e3"></div>
<div style="left:1295px;top:113px;width:1px;height:22px;background:#e2e3e3"></div>
<div style="left:48px;top:117px;font:13.65px 'Liberation Sans',sans-serif;color:#000;white-space:nowrap;line-height:16px;width:155px;text-align:right">12/19/2019 15:54:10</div>
<div style="left:213px;top:117px;font:13.65px 'Liberation Sans',sans-serif;color:#000;white-space:nowrap;line-height:16px">Claire</div>
<div style="left:372px;top:117px;font:13.65px 'Liberation Sans',sans-serif;color:#000;white-space:nowrap;line-height:16px">12/19/19</div>
<div style="left:531px;top:117px;font:13.65px 'Liberation Sans',sans-serif;color:#000;white-space:nowrap;line-height:16px;width:182px;overflow:hidden">Team Management</div>
<div style="left:718px;top:117px;font:13.65px 'Liberation Sans',sans-serif;color:#000;white-space:nowrap;line-height:16px;width:538px;overflow:hidden"></div>
<div style="left:0px;top:135px;width:47px;height:21px;background:#e8eaed"></div>
<div style="left:0px;top:140px;font:10.8px 'Liberation Sans',sans-serif;color:#5f6368;width:47px;text-align:center;line-height:12px">21</div>
<div style="left:0px;top:156px;width:47px;height:1px;background:#c0c0c0"></div>
<div style="left:48px;top:156px;width:1248px;height:1px;background:#e2e3e3"></div>
<div style="left:47px;top:135px;width:1px;height:22px;background:#c0c0c0"></div>
<div style="left:206px;top:135px;width:1px;height:21px;background:#e2e3e3"></div>
<div style="left:209px;top:135px;width:1px;height:21px;background:#e2e3e3"></div>
<div style="left:368px;top:135px;width:1px;height:21px;background:#e2e3e3"></div>
<div style="left:527px;top:135px;width:1px;height:21px;background:#e2e3e3"></div>
<div style="left:714px;top:135px;width:1px;height:21px;background:#e2e3e3"></div>
<div style="left:1257px;top:135px;width:1px;height:21px;background:#e2e3e3"></div>
<div style="left:1295px;top:135px;width:1px;height:22px;background:#e2e3e3"></div>
<div style="left:48px;top:139px;font:13.65px 'Liberation Sans',sans-serif;color:#000;white-space:nowrap;line-height:16px;width:155px;text-align:right">12/19/2019 16:00:13</div>
<div style="left:213px;top:139px;font:13.65px 'Liberation Sans',sans-serif;color:#000;white-space:nowrap;line-height:16px">Emma</div>
<div style="left:372px;top:139px;font:13.65px 'Liberation Sans',sans-serif;color:#000;white-space:nowrap;line-height:16px">12/19/19</div>
<div style="left:531px;top:139px;font:13.65px 'Liberation Sans',sans-serif;color:#000;white-space:nowrap;line-height:16px;width:182px;overflow:hidden">Code, Art</div>
<div style="left:718px;top:139px;font:13.65px 'Liberation Sans',sans-serif;color:#000;white-space:nowrap;line-height:16px;width:538px;overflow:hidden">Paige and I finished coding the title screen</div>
<div style="left:1261px;top:139px;font:13.65px 'Liberation Sans',sans-serif;color:#000;white-space:nowrap;line-height:16px;width:34px;overflow:hidden">I worked</div>
<div style="left:0px;top:157px;width:47px;height:21px;background:#f8f9fa"></div>
<div style="left:0px;top:162px;font:10.8px 'Liberation Sans',sans-serif;color:#5f6368;width:47px;text-align:center;line-height:12px">22</div>
<div style="left:0px;top:178px;width:47px;height:1px;background:#c0c0c0"></div>
<div style="left:48px;top:178px;width:1248px;height:1px;background:#e2e3e3"></div>
<div style="left:47px;top:157px;width:1px;height:22px;background:#c0c0c0"></div>
<div style="left:206px;top:157px;width:1px;height:21px;background:#e2e3e3"></div>
<div style="left:209px;top:157px;width:1px;height:21px;background:#e2e3e3"></div>
<div style="left:368px;top:157px;width:1px;height:21px;background:#e2e3e3"></div>
<div style="left:527px;top:157px;width:1px;height:21px;background:#e2e3e3"></div>
<div style="left:714px;top:157px;width:1px;height:21px;background:#e2e3e3"></div>
<div style="left:1257px;top:157px;width:1px;height:21px;background:#e2e3e3"></div>
<div style="left:1295px;top:157px;width:1px;height:22px;background:#e2e3e3"></div>
<div style="left:48px;top:161px;font:13.65px 'Liberation Sans',sans-serif;color:#000;white-space:nowrap;line-height:16px;width:155px;text-align:right">12/19/2019 16:00:46</div>
<div style="left:213px;top:161px;font:13.65px 'Liberation Sans',sans-serif;color:#000;white-space:nowrap;line-height:16px">Paige</div>
<div style="left:372px;top:161px;font:13.65px 'Liberation Sans',sans-serif;color:#000;white-space:nowrap;line-height:16px">12/19/19</div>
<div style="left:531px;top:161px;font:13.65px 'Liberation Sans',sans-serif;color:#000;white-space:nowrap;line-height:16px;width:182px;overflow:hidden">Code, Art</div>
<div style="left:718px;top:161px;font:13.65px 'Liberation Sans',sans-serif;color:#000;white-space:nowrap;line-height:16px;width:538px;overflow:hidden">Emma and I finished coding the menu screen</div>
<div style="left:1261px;top:161px;font:13.65px 'Liberation Sans',sans-serif;color:#000;white-space:nowrap;line-height:16px;width:34px;overflow:hidden">I worked</div>
<div style="left:0px;top:179px;width:47px;height:21px;background:#f8f9fa"></div>
<div style="left:0px;top:184px;font:10.8px 'Liberation Sans',sans-serif;color:#5f6368;width:47px;text-align:center;line-height:12px">23</div>
<div style="left:0px;top:200px;width:47px;height:1px;background:#c0c0c0"></div>
<div style="left:48px;top:200px;width:1248px;height:1px;background:#e2e3e3"></div>
<div style="left:47px;top:179px;width:1px;height:22px;background:#c0c0c0"></div>
<div style="left:206px;top:179px;width:1px;height:21px;background:#e2e3e3"></div>
<div style="left:209px;top:179px;width:1px;height:21px;background:#e2e3e3"></div>
<div style="left:368px;top:179px;width:1px;height:21px;background:#e2e3e3"></div>
<div style="left:527px;top:179px;width:1px;height:21px;background:#e2e3e3"></div>
<div style="left:714px;top:179px;width:1px;height:21px;background:#e2e3e3"></div>
<div style="left:1257px;top:179px;width:1px;height:21px;background:#e2e3e3"></div>
<div style="left:1295px;top:179px;width:1px;height:22px;background:#e2e3e3"></div>
<div style="left:48px;top:183px;font:13.65px 'Liberation Sans',sans-serif;color:#000;white-space:nowrap;line-height:16px;width:155px;text-align:right">12/19/2019 16:01:08</div>
<div style="left:213px;top:183px;font:13.65px 'Liberation Sans',sans-serif;color:#000;white-space:nowrap;line-height:16px">Phoebe</div>
<div style="left:372px;top:183px;font:13.65px 'Liberation Sans',sans-serif;color:#000;white-space:nowrap;line-height:16px">12/19/19</div>
<div style="left:531px;top:183px;font:13.65px 'Liberation Sans',sans-serif;color:#000;white-space:nowrap;line-height:16px;width:182px;overflow:hidden">Team Management</div>
<div style="left:718px;top:183px;font:13.65px 'Liberation Sans',sans-serif;color:#000;white-space:nowrap;line-height:16px;width:538px;overflow:hidden"></div>
<div style="left:0px;top:201px;width:47px;height:21px;background:#f8f9fa"></div>
<div style="left:0px;top:206px;font:10.8px 'Liberation Sans',sans-serif;color:#5f6368;width:47px;text-align:center;line-height:12px">24</div>
<div style="left:0px;top:222px;width:47px;height:1px;background:#c0c0c0"></div>
<div style="left:48px;top:222px;width:1248px;height:1px;background:#e2e3e3"></div>
<div style="left:47px;top:201px;width:1px;height:22px;background:#c0c0c0"></div>
<div style="left:206px;top:201px;width:1px;height:21px;background:#e2e3e3"></div>
<div style="left:209px;top:201px;width:1px;height:21px;background:#e2e3e3"></div>
<div style="left:368px;top:201px;width:1px;height:21px;background:#e2e3e3"></div>
<div style="left:527px;top:201px;width:1px;height:21px;background:#e2e3e3"></div>
<div style="left:714px;top:201px;width:1px;height:21px;background:#e2e3e3"></div>
<div style="left:1295px;top:201px;width:1px;height:22px;background:#e2e3e3"></div>
<div style="left:48px;top:205px;font:13.65px 'Liberation Sans',sans-serif;color:#000;white-space:nowrap;line-height:16px;width:155px;text-align:right">12/22/2019 15:48:38</div>
<div style="left:213px;top:205px;font:13.65px 'Liberation Sans',sans-serif;color:#000;white-space:nowrap;line-height:16px">Claire</div>
<div style="left:372px;top:205px;font:13.65px 'Liberation Sans',sans-serif;color:#000;white-space:nowrap;line-height:16px">12/22/19</div>
<div style="left:531px;top:205px;font:13.65px 'Liberation Sans',sans-serif;color:#000;white-space:nowrap;line-height:16px;width:182px;overflow:hidden">Code</div>
<div style="left:718px;top:205px;font:13.65px 'Liberation Sans',sans-serif;color:#000;white-space:nowrap;line-height:16px;width:577px;overflow:hidden">We added the diver and the jellyfish obstacle, but are having problems with moving the jellyfish.</div>
<div style="left:0px;top:223px;width:47px;height:21px;background:#f8f9fa"></div>
<div style="left:0px;top:228px;font:10.8px 'Liberation Sans',sans-serif;color:#5f6368;width:47px;text-align:center;line-height:12px">25</div>
<div style="left:0px;top:244px;width:47px;height:1px;background:#c0c0c0"></div>
<div style="left:48px;top:244px;width:1248px;height:1px;background:#e2e3e3"></div>
<div style="left:47px;top:223px;width:1px;height:22px;background:#c0c0c0"></div>
<div style="left:206px;top:223px;width:1px;height:21px;background:#e2e3e3"></div>
<div style="left:209px;top:223px;width:1px;height:21px;background:#e2e3e3"></div>
<div style="left:368px;top:223px;width:1px;height:21px;background:#e2e3e3"></div>
<div style="left:527px;top:223px;width:1px;height:21px;background:#e2e3e3"></div>
<div style="left:714px;top:223px;width:1px;height:21px;background:#e2e3e3"></div>
<div style="left:1295px;top:223px;width:1px;height:22px;background:#e2e3e3"></div>
<div style="left:48px;top:227px;font:13.65px 'Liberation Sans',sans-serif;color:#000;white-space:nowrap;line-height:16px;width:155px;text-align:right">12/22/2019 15:50:12</div>
<div style="left:213px;top:227px;font:13.65px 'Liberation Sans',sans-serif;color:#000;white-space:nowrap;line-height:16px">Phoebe</div>
<div style="left:372px;top:227px;font:13.65px 'Liberation Sans',sans-serif;color:#000;white-space:nowrap;line-height:16px">12/22/19</div>
<div style="left:531px;top:227px;font:13.65px 'Liberation Sans',sans-serif;color:#000;white-space:nowrap;line-height:16px;width:182px;overflow:hidden">Code</div>
<div style="left:718px;top:227px;font:13.65px 'Liberation Sans',sans-serif;color:#000;white-space:nowrap;line-height:16px;width:577px;overflow:hidden">Helped Claire with coding, we attempted to get through another tutorial where we have moving jellyfish</div>
<div style="left:0px;top:245px;width:47px;height:21px;background:#f8f9fa"></div>
<div style="left:0px;top:250px;font:10.8px 'Liberation Sans',sans-serif;color:#5f6368;width:47px;text-align:center;line-height:12px">26</div>
<div style="left:0px;top:266px;width:47px;height:1px;background:#c0c0c0"></div>
<div style="left:48px;top:266px;width:1248px;height:1px;background:#e2e3e3"></div>
<div style="left:47px;top:245px;width:1px;height:22px;background:#c0c0c0"></div>
<div style="left:206px;top:245px;width:1px;height:21px;background:#e2e3e3"></div>
<div style="left:209px;top:245px;width:1px;height:21px;background:#e2e3e3"></div>
<div style="left:368px;top:245px;width:1px;height:21px;background:#e2e3e3"></div>
<div style="left:527px;top:245px;width:1px;height:21px;background:#e2e3e3"></div>
<div style="left:714px;top:245px;width:1px;height:21px;background:#e2e3e3"></div>
<div style="left:1295px;top:245px;width:1px;height:22px;background:#e2e3e3"></div>
<div style="left:48px;top:249px;font:13.65px 'Liberation Sans',sans-serif;color:#000;white-space:nowrap;line-height:16px;width:155px;text-align:right">12/26/2019 11:51:11</div>
<div style="left:213px;top:249px;font:13.65px 'Liberation Sans',sans-serif;color:#000;white-space:nowrap;line-height:16px">Claire</div>
<div style="left:372px;top:249px;font:13.65px 'Liberation Sans',sans-serif;color:#000;white-space:nowrap;line-height:16px">12/26/19</div>
<div style="left:531px;top:249px;font:13.65px 'Liberation Sans',sans-serif;color:#000;white-space:nowrap;line-height:16px;width:182px;overflow:hidden">Code</div>
<div style="left:718px;top:249px;font:13.65px 'Liberation Sans',sans-serif;color:#000;white-space:nowrap;line-height:16px;width:577px;overflow:hidden">We fixed our bug from the last time we met and added to the game so that when the diver hits the</div>
<div style="left:0px;top:267px;width:47px;height:21px;background:#f8f9fa"></div>
<div style="left:0px;top:272px;font:10.8px 'Liberation Sans',sans-serif;color:#5f6368;width:47px;text-align:center;line-height:12px">27</div>
<div style="left:0px;top:288px;width:47px;height:1px;background:#c0c0c0"></div>
<div style="left:48px;top:288px;width:1248px;height:1px;background:#e2e3e3"></div>
<div style="left:47px;top:267px;width:1px;height:22px;background:#c0c0c0"></div>
<div style="left:206px;top:267px;width:1px;height:21px;background:#e2e3e3"></div>
<div style="left:209px;top:267px;width:1px;height:21px;background:#e2e3e3"></div>
<div style="left:368px;top:267px;width:1px;height:21px;background:#e2e3e3"></div>
<div style="left:527px;top:267px;width:1px;height:21px;background:#e2e3e3"></div>
<div style="left:714px;top:267px;width:1px;height:21px;background:#e2e3e3"></div>
<div style="left:1295px;top:267px;width:1px;height:22px;background:#e2e3e3"></div>
<div style="left:48px;top:271px;font:13.65px 'Liberation Sans',sans-serif;color:#000;white-space:nowrap;line-height:16px;width:155px;text-align:right">12/26/2019 11:52:51</div>
<div style="left:213px;top:271px;font:13.65px 'Liberation Sans',sans-serif;color:#000;white-space:nowrap;line-height:16px">Phoebe</div>
<div style="left:372px;top:271px;font:13.65px 'Liberation Sans',sans-serif;color:#000;white-space:nowrap;line-height:16px">12/26/19</div>
<div style="left:531px;top:271px;font:13.65px 'Liberation Sans',sans-serif;color:#000;white-space:nowrap;line-height:16px;width:182px;overflow:hidden">Code</div>
<div style="left:718px;top:271px;font:13.65px 'Liberation Sans',sans-serif;color:#000;white-space:nowrap;line-height:16px;width:577px;overflow:hidden">we fixed the bug from last time and if you hit a jellyfish the game will end and you can restart.</div>
<div style="left:0px;top:289px;width:47px;height:21px;background:#f8f9fa"></div>
<div style="left:0px;top:294px;font:10.8px 'Liberation Sans',sans-serif;color:#5f6368;width:47px;text-align:center;line-height:12px">28</div>
<div style="left:0px;top:310px;width:47px;height:1px;background:#c0c0c0"></div>
<div style="left:48px;top:310px;width:1248px;height:1px;background:#e2e3e3"></div>
<div style="left:47px;top:289px;width:1px;height:22px;background:#c0c0c0"></div>
<div style="left:206px;top:289px;width:1px;height:21px;background:#e2e3e3"></div>
<div style="left:209px;top:289px;width:1px;height:21px;background:#e2e3e3"></div>
<div style="left:368px;top:289px;width:1px;height:21px;background:#e2e3e3"></div>
<div style="left:527px;top:289px;width:1px;height:21px;background:#e2e3e3"></div>
<div style="left:714px;top:289px;width:1px;height:21px;background:#e2e3e3"></div>
<div style="left:1257px;top:289px;width:1px;height:21px;background:#e2e3e3"></div>
<div style="left:1295px;top:289px;width:1px;height:22px;background:#e2e3e3"></div>
<div style="left:48px;top:293px;font:13.65px 'Liberation Sans',sans-serif;color:#000;white-space:nowrap;line-height:16px;width:155px;text-align:right">12/28/2019 15:57:02</div>
<div style="left:213px;top:293px;font:13.65px 'Liberation Sans',sans-serif;color:#000;white-space:nowrap;line-height:16px">Claire</div>
<div style="left:372px;top:293px;font:13.65px 'Liberation Sans',sans-serif;color:#000;white-space:nowrap;line-height:16px">12/28/19</div>
<div style="left:531px;top:293px;font:13.65px 'Liberation Sans',sans-serif;color:#000;white-space:nowrap;line-height:16px;width:182px;overflow:hidden">Code</div>
<div style="left:718px;top:293px;font:13.65px 'Liberation Sans',sans-serif;color:#000;white-space:nowrap;line-height:16px;width:538px;overflow:hidden">We added to basic score, increased the speed gradually, and created a restart option.</div>
<div style="left:0px;top:311px;width:47px;height:21px;background:#f8f9fa"></div>
<div style="left:0px;top:316px;font:10.8px 'Liberation Sans',sans-serif;color:#5f6368;width:47px;text-align:center;line-height:12px">29</div>
<div style="left:0px;top:332px;width:47px;height:1px;background:#c0c0c0"></div>
<div style="left:48px;top:332px;width:1248px;height:1px;background:#e2e3e3"></div>
<div style="left:47px;top:311px;width:1px;height:22px;background:#c0c0c0"></div>
<div style="left:206px;top:311px;width:1px;height:21px;background:#e2e3e3"></div>
<div style="left:209px;top:311px;width:1px;height:21px;background:#e2e3e3"></div>
<div style="left:368px;top:311px;width:1px;height:21px;background:#e2e3e3"></div>
<div style="left:527px;top:311px;width:1px;height:21px;background:#e2e3e3"></div>
<div style="left:714px;top:311px;width:1px;height:21px;background:#e2e3e3"></div>
<div style="left:1295px;top:311px;width:1px;height:22px;background:#e2e3e3"></div>
<div style="left:48px;top:315px;font:13.65px 'Liberation Sans',sans-serif;color:#000;white-space:nowrap;line-height:16px;width:155px;text-align:right">12/28/2019 15:59:57</div>
<div style="left:213px;top:315px;font:13.65px 'Liberation Sans',sans-serif;color:#000;white-space:nowrap;line-height:16px">Phoebe</div>
<div style="left:372px;top:315px;font:13.65px 'Liberation Sans',sans-serif;color:#000;white-space:nowrap;line-height:16px">12/28/19</div>
<div style="left:531px;top:315px;font:13.65px 'Liberation Sans',sans-serif;color:#000;white-space:nowrap;line-height:16px;width:182px;overflow:hidden">Code, Team Management</div>
<div style="left:718px;top:315px;font:13.65px 'Liberation Sans',sans-serif;color:#000;white-space:nowrap;line-height:16px;width:577px;overflow:hidden">Claire and I were able to make things speed up over time, put in a new restart button, and created</div>
<div style="left:0px;top:333px;width:47px;height:21px;background:#f8f9fa"></div>
<div style="left:0px;top:338px;font:10.8px 'Liberation Sans',sans-serif;color:#5f6368;width:47px;text-align:center;line-height:12px">30</div>
<div style="left:0px;top:354px;width:47px;height:1px;background:#c0c0c0"></div>
<div style="left:48px;top:354px;width:1248px;height:1px;background:#e2e3e3"></div>
<div style="left:47px;top:333px;width:1px;height:22px;background:#c0c0c0"></div>
<div style="left:206px;top:333px;width:1px;height:21px;background:#e2e3e3"></div>
<div style="left:209px;top:333px;width:1px;height:21px;background:#e2e3e3"></div>
<div style="left:368px;top:333px;width:1px;height:21px;background:#e2e3e3"></div>
<div style="left:527px;top:333px;width:1px;height:21px;background:#e2e3e3"></div>
<div style="left:714px;top:333px;width:1px;height:21px;background:#e2e3e3"></div>
<div style="left:1257px;top:333px;width:1px;height:21px;background:#e2e3e3"></div>
<div style="left:1295px;top:333px;width:1px;height:22px;background:#e2e3e3"></div>
<div style="left:48px;top:337px;font:13.65px 'Liberation Sans',sans-serif;color:#000;white-space:nowrap;line-height:16px;width:155px;text-align:right">12/31/2019 15:49:07</div>
<div style="left:213px;top:337px;font:13.65px 'Liberation Sans',sans-serif;color:#000;white-space:nowrap;line-height:16px">Claire</div>
<div style="left:372px;top:337px;font:13.65px 'Liberation Sans',sans-serif;color:#000;white-space:nowrap;line-height:16px">12/31/19</div>
<div style="left:531px;top:337px;font:13.65px 'Liberation Sans',sans-serif;color:#000;white-space:nowrap;line-height:16px;width:182px;overflow:hidden">Code, Team Management</div>
<div style="left:718px;top:337px;font:13.65px 'Liberation Sans',sans-serif;color:#000;white-space:nowrap;line-height:16px;width:538px;overflow:hidden">We started our Easter egg by putting in the sprite art and fixed glitching jellyfish.</div>
<div style="left:0px;top:355px;width:47px;height:21px;background:#f8f9fa"></div>
<div style="left:0px;top:360px;font:10.8px 'Liberation Sans',sans-serif;color:#5f6368;width:47px;text-align:center;line-height:12px">31</div>
<div style="left:0px;top:376px;width:47px;height:1px;background:#c0c0c0"></div>
<div style="left:48px;top:376px;width:1248px;height:1px;background:#e2e3e3"></div>
<div style="left:47px;top:355px;width:1px;height:22px;background:#c0c0c0"></div>
<div style="left:206px;top:355px;width:1px;height:21px;background:#e2e3e3"></div>
<div style="left:209px;top:355px;width:1px;height:21px;background:#e2e3e3"></div>
<div style="left:368px;top:355px;width:1px;height:21px;background:#e2e3e3"></div>
<div style="left:527px;top:355px;width:1px;height:21px;background:#e2e3e3"></div>
<div style="left:714px;top:355px;width:1px;height:21px;background:#e2e3e3"></div>
<div style="left:1257px;top:355px;width:1px;height:21px;background:#e2e3e3"></div>
<div style="left:1295px;top:355px;width:1px;height:22px;background:#e2e3e3"></div>
<div style="left:48px;top:359px;font:13.65px 'Liberation Sans',sans-serif;color:#000;white-space:nowrap;line-height:16px;width:155px;text-align:right">12/31/2019 15:52:07</div>
<div style="left:213px;top:359px;font:13.65px 'Liberation Sans',sans-serif;color:#000;white-space:nowrap;line-height:16px">Phoebe</div>
<div style="left:372px;top:359px;font:13.65px 'Liberation Sans',sans-serif;color:#000;white-space:nowrap;line-height:16px">12/31/19</div>
<div style="left:531px;top:359px;font:13.65px 'Liberation Sans',sans-serif;color:#000;white-space:nowrap;line-height:16px;width:182px;overflow:hidden">Code, Team Management</div>
<div style="left:718px;top:359px;font:13.65px 'Liberation Sans',sans-serif;color:#000;white-space:nowrap;line-height:16px;width:538px;overflow:hidden">fixed double jellyfish</div>
<div style="left:0px;top:377px;width:47px;height:21px;background:#f8f9fa"></div>
<div style="left:0px;top:382px;font:10.8px 'Liberation Sans',sans-serif;color:#5f6368;width:47px;text-align:center;line-height:12px">32</div>
<div style="left:0px;top:398px;width:47px;height:1px;background:#c0c0c0"></div>
<div style="left:48px;top:398px;width:1248px;height:1px;background:#e2e3e3"></div>
<div style="left:47px;top:377px;width:1px;height:22px;background:#c0c0c0"></div>
<div style="left:206px;top:377px;width:1px;height:21px;background:#e2e3e3"></div>
<div style="left:209px;top:377px;width:1px;height:21px;background:#e2e3e3"></div>
<div style="left:368px;top:377px;width:1px;height:21px;background:#e2e3e3"></div>
<div style="left:527px;top:377px;width:1px;height:21px;background:#e2e3e3"></div>
<div style="left:714px;top:377px;width:1px;height:21px;background:#e2e3e3"></div>
<div style="left:1295px;top:377px;width:1px;height:22px;background:#e2e3e3"></div>
<div style="left:48px;top:381px;font:13.65px 'Liberation Sans',sans-serif;color:#000;white-space:nowrap;line-height:16px;width:155px;text-align:right">1/1/2020 15:51:47</div>
<div style="left:213px;top:381px;font:13.65px 'Liberation Sans',sans-serif;color:#000;white-space:nowrap;line-height:16px">Claire</div>
<div style="left:372px;top:381px;font:13.65px 'Liberation Sans',sans-serif;color:#000;white-space:nowrap;line-height:16px">01/01/20</div>
<div style="left:531px;top:381px;font:13.65px 'Liberation Sans',sans-serif;color:#000;white-space:nowrap;line-height:16px;width:182px;overflow:hidden">Code</div>
<div style="left:718px;top:381px;font:13.65px 'Liberation Sans',sans-serif;color:#000;white-space:nowrap;line-height:16px;width:577px;overflow:hidden">We started working on the easter egg of chaging from a diver to a mermaid. We have stopeed for</div>
<div style="left:0px;top:399px;width:47px;height:21px;background:#f8f9fa"></div>
<div style="left:0px;top:404px;font:10.8px 'Liberation Sans',sans-serif;color:#5f6368;width:47px;text-align:center;line-height:12px">33</div>
<div style="left:0px;top:420px;width:47px;height:1px;background:#c0c0c0"></div>
<div style="left:48px;top:420px;width:1248px;height:1px;background:#e2e3e3"></div>
<div style="left:47px;top:399px;width:1px;height:22px;background:#c0c0c0"></div>
<div style="left:206px;top:399px;width:1px;height:21px;background:#e2e3e3"></div>
<div style="left:209px;top:399px;width:1px;height:21px;background:#e2e3e3"></div>
<div style="left:368px;top:399px;width:1px;height:21px;background:#e2e3e3"></div>
<div style="left:527px;top:399px;width:1px;height:21px;background:#e2e3e3"></div>
<div style="left:714px;top:399px;width:1px;height:21px;background:#e2e3e3"></div>
<div style="left:1257px;top:399px;width:1px;height:21px;background:#e2e3e3"></div>
<div style="left:1295px;top:399px;width:1px;height:22px;background:#e2e3e3"></div>
<div style="left:48px;top:403px;font:13.65px 'Liberation Sans',sans-serif;color:#000;white-space:nowrap;line-height:16px;width:155px;text-align:right">1/1/2020 15:52:40</div>
<div style="left:213px;top:403px;font:13.65px 'Liberation Sans',sans-serif;color:#000;white-space:nowrap;line-height:16px">Phoebe</div>
<div style="left:372px;top:403px;font:13.65px 'Liberation Sans',sans-serif;color:#000;white-space:nowrap;line-height:16px">01/01/20</div>
<div style="left:531px;top:403px;font:13.65px 'Liberation Sans',sans-serif;color:#000;white-space:nowrap;line-height:16px;width:182px;overflow:hidden">Code</div>
<div style="left:718px;top:403px;font:13.65px 'Liberation Sans',sans-serif;color:#000;white-space:nowrap;line-height:16px;width:538px;overflow:hidden">Worked on easter egg. also have new bug!</div>
<div style="left:0px;top:421px;width:47px;height:21px;background:#f8f9fa"></div>
<div style="left:0px;top:426px;font:10.8px 'Liberation Sans',sans-serif;color:#5f6368;width:47px;text-align:center;line-height:12px">34</div>
<div style="left:0px;top:442px;width:47px;height:1px;background:#c0c0c0"></div>
<div style="left:48px;top:442px;width:1248px;height:1px;background:#e2e3e3"></div>
<div style="left:47px;top:421px;width:1px;height:22px;background:#c0c0c0"></div>
<div style="left:206px;top:421px;width:1px;height:21px;background:#e2e3e3"></div>
<div style="left:209px;top:421px;width:1px;height:21px;background:#e2e3e3"></div>
<div style="left:368px;top:421px;width:1px;height:21px;background:#e2e3e3"></div>
<div style="left:527px;top:421px;width:1px;height:21px;background:#e2e3e3"></div>
<div style="left:714px;top:421px;width:1px;height:21px;background:#e2e3e3"></div>
<div style="left:1295px;top:421px;width:1px;height:22px;background:#e2e3e3"></div>
<div style="left:48px;top:425px;font:13.65px 'Liberation Sans',sans-serif;color:#000;white-space:nowrap;line-height:16px;width:155px;text-align:right">1/4/2020 15:43:37</div>
<div style="left:213px;top:425px;font:13.65px 'Liberation Sans',sans-serif;color:#000;white-space:nowrap;line-height:16px">Claire</div>
<div style="left:372px;top:425px;font:13.65px 'Liberation Sans',sans-serif;color:#000;white-space:nowrap;line-height:16px">01/04/20</div>
<div style="left:531px;top:425px;font:13.65px 'Liberation Sans',sans-serif;color:#000;white-space:nowrap;line-height:16px;width:182px;overflow:hidden">Code, Team Management</div>
<div style="left:718px;top:425px;font:13.65px 'Liberation Sans',sans-serif;color:#000;white-space:nowrap;line-height:16px;width:577px;overflow:hidden">We fixed the bug and finished the easter egg. We also changed the main character from a diver to</div>
<div style="left:0px;top:443px;width:47px;height:21px;background:#f8f9fa"></div>
<div style="left:0px;top:448px;font:10.8px 'Liberation Sans',sans-serif;color:#5f6368;width:47px;text-align:center;line-height:12px">35</div>
<div style="left:0px;top:464px;width:47px;height:1px;background:#c0c0c0"></div>
<div style="left:48px;top:464px;width:1248px;height:1px;background:#e2e3e3"></div>
<div style="left:47px;top:443px;width:1px;height:22px;background:#c0c0c0"></div>
<div style="left:206px;top:443px;width:1px;height:21px;background:#e2e3e3"></div>
<div style="left:209px;top:443px;width:1px;height:21px;background:#e2e3e3"></div>
<div style="left:368px;top:443px;width:1px;height:21px;background:#e2e3e3"></div>
<div style="left:527px;top:443px;width:1px;height:21px;background:#e2e3e3"></div>
<div style="left:714px;top:443px;width:1px;height:21px;background:#e2e3e3"></div>
<div style="left:1295px;top:443px;width:1px;height:22px;background:#e2e3e3"></div>
<div style="left:48px;top:447px;font:13.65px 'Liberation Sans',sans-serif;color:#000;white-space:nowrap;line-height:16px;width:155px;text-align:right">1/4/2020 15:45:50</div>
<div style="left:213px;top:447px;font:13.65px 'Liberation Sans',sans-serif;color:#000;white-space:nowrap;line-height:16px">Phoebe</div>
<div style="left:372px;top:447px;font:13.65px 'Liberation Sans',sans-serif;color:#000;white-space:nowrap;line-height:16px">01/04/20</div>
<div style="left:531px;top:447px;font:13.65px 'Liberation Sans',sans-serif;color:#000;white-space:nowrap;line-height:16px;width:182px;overflow:hidden">Code, Team Management</div>
<div style="left:718px;top:447px;font:13.65px 'Liberation Sans',sans-serif;color:#000;white-space:nowrap;line-height:16px;width:577px;overflow:hidden">we fixed our last bug by changing the room dimensions in alarm 2. We changed the height from</div>
<div style="left:1296px;top:26px;width:10px;height:429px;background:#fff"></div>
<div style="left:1296px;top:1px;width:10px;height:46px;background:#f8f9fa"></div>
<div style="left:1295px;top:1px;width:1px;height:52px;background:#dadce0"></div>
<div style="left:1296px;top:47px;width:10px;height:5px;background:#dadfe8"></div>
</div>
<div style="left:209px;top:343px;width:160px;height:23px;border:2px solid #1a73e8;box-sizing:border-box"></div>
<div style="left:364px;top:361px;width:8px;height:8px;background:#1a73e8;border:1px solid #fff;box-sizing:border-box"></div>
<div style="left:0px;top:664px;width:1306px;height:11px;background:#fff"></div>
<div style="left:0px;top:664px;width:47px;height:11px;background:#f8f9fa"></div>
<div style="left:47px;top:664px;width:1px;height:11px;background:#c0c0c0"></div>
<div style="left:49px;top:665px;width:571px;height:9px;background:#dadce0;border-radius:4.5px"></div>
<div style="left:0px;top:675px;width:1306px;height:42px;background:#f1f3f4"></div>
<div style="left:121px;top:675px;width:207px;height:42px;background:#fff;box-shadow:0 1px 3px rgba(60,64,67,.3)"></div>
<div style="left:164px;top:685px;font:14px 'Liberation Sans',sans-serif;color:#188038;white-space:nowrap;line-height:18px;letter-spacing:0.6px;-webkit-text-stroke:0.35px #188038">Form Responses 1</div>
<svg style="position:absolute;left:302px;top:692px" width="8" height="4" viewBox="0 0 8 4"><path d="M0 0 H8 L4.0 4 Z" fill="#188038"/></svg>
<svg style="position:absolute;left:52px;top:689px" width="12" height="12" viewBox="0 0 12 12"><path d="M6 0 V12 M0 6 H12" stroke="#5f6368" stroke-width="2"/></svg>
<svg style="position:absolute;left:84px;top:689px" width="13" height="12" viewBox="0 0 13 12"><path d="M0 1 H13 M0 4.3 H13 M0 7.6 H13 M0 11 H13" stroke="#5f6368" stroke-width="1.6"/></svg>
<div style="left:1196px;top:675px;width:110px;height:42px;background:#fafbfb"></div>
<div style="left:1196px;top:676px;width:1px;height:41px;background:#c8cacc"></div>
<div style="left:0px;top:675px;width:1306px;height:1px;background:#e8eaed"></div>
<div style="left:1243px;top:687px;font:12.2px 'Liberation Sans',sans-serif;color:#0f9d58;line-height:16px;-webkit-text-stroke:0.2px #0f9d58">Explore</div>
<svg style="position:absolute;left:1209px;top:685px" width="19" height="21" viewBox="0 0 19 21"><path d="M2 0 H17 Q19 0 19 2 V16 Q19 18 17 18 H12 L9.5 21 L7 18 H2 Q0 18 0 16 V2 Q0 0 2 0 Z" fill="#0f9d58"/><path d="M9.5 3.5 Q10.3 8.2 15 9 Q10.3 9.8 9.5 14.5 Q8.7 9.8 4 9 Q8.7 8.2 9.5 3.5 Z" fill="#fff"/></svg>
<svg style="position:absolute;left:1333px;top:683px" width="7" height="11" viewBox="0 0 7 11"><path d="M1 1 L5.5 5.5 L1 10" fill="none" stroke="#5f6368" stroke-width="1.6"/></svg>
<div style="left:0px;top:717px;width:1365px;height:51px;background:#202124"></div>
<div style="left:6px;top:723px;width:38px;height:38px;background:#3a3b3e;border-radius:50%"></div>
<div style="left:17px;top:734px;width:16px;height:16px;border:2px solid #fff;border-radius:50%;box-sizing:border-box"></div>
<div style="left:1187px;top:723px;width:38px;height:38px;background:#505154;border-radius:50%"></div>
<div style="left:1233px;top:723px;width:126px;height:38px;background:#35363a;border-radius:19px"></div>
<div style="left:1317px;top:734px;font:14.8px 'Liberation Sans',sans-serif;color:#e8eaed;line-height:17px">9:16</div>
<div style="left:1248px;top:733px;width:17px;height:17px;background:#e8eaed;border-radius:50%"></div>
<div style="left:1248px;top:734px;font:bold 11px 'Liberation Sans',sans-serif;color:#35363a;width:17px;text-align:center;line-height:15px">2</div>
<svg style="position:absolute;left:1329px;top:165px" width="17" height="18" viewBox="0 0 17 18"><rect x="1" y="0" width="15" height="3" rx="0.8" fill="#b8bcc2"/><path d="M0 3 H17 V16.2 Q17 17.2 16 17.2 H1 Q0 17.2 0 16.2 Z" fill="#4285f4"/><path d="M0 3 H17 V10 H0 Z" fill="#3a70d8"/><text x="8.5" y="14.2" font-family="Liberation Sans" font-size="9.5" fill="#d2e3fc" text-anchor="middle">31</text></svg>
<svg style="position:absolute;left:1329px;top:223px" width="17" height="17" viewBox="0 0 17 17"><path d="M0 1.5 Q0 0 1.5 0 H16.5 Q18 0 18 1.5 V12 L12 17 H1.5 Q0 17 0 15.5 Z" fill="#f6b400"/><path d="M18 12 L12 17 V13.5 Q12 12 13.5 12 Z" fill="#fce19a"/><circle cx="9" cy="6.6" r="3.6" fill="none" stroke="#fde293" stroke-width="1"/><path d="M7.6 10.6 H10.4 V12.6 H7.6 Z" fill="none" stroke="#fde293" stroke-width="0.9"/></svg>
<svg style="position:absolute;left:1328px;top:281px" width="20" height="20" viewBox="0 0 20 20"><circle cx="9.8" cy="9.6" r="9.6" fill="#4285f4"/><path d="M7 13.5 L14 6.5" stroke="#fff" stroke-width="2.4" stroke-linecap="round"/><circle cx="4.6" cy="10" r="1.7" fill="#fbbc04"/></svg>
<div style="left:1297px;top:299px;width:9px;height:39px;background:#dadce0;border-radius:4.5px"></div>
<div style="left:1296px;top:632px;width:10px;height:31px;background:#f8f9fa"></div>
<div style="left:1296px;top:631px;width:10px;height:1px;background:#e2e3e3"></div>
<div style="left:1296px;top:647px;width:10px;height:1px;background:#e2e3e3"></div>
<div style="left:1296px;top:663px;width:10px;height:1px;background:#e2e3e3"></div>
<svg style="position:absolute;left:1298px;top:637px" width="8" height="5" viewBox="0 0 8 5"><path d="M0.5 4 L3.8 0.5 L7 4 Z" fill="#b0b3b8"/></svg>
<svg style="position:absolute;left:1298px;top:654px" width="8" height="5" viewBox="0 0 8 5"><path d="M0.5 0.5 L3.8 4 L7 0.5 Z" fill="#b0b3b8"/></svg>
<div style="left:1263px;top:664px;width:32px;height:11px;background:#f8f9fa"></div>
<div style="left:1263px;top:664px;width:1px;height:11px;background:#e2e3e3"></div>
<div style="left:1278px;top:664px;width:1px;height:11px;background:#e2e3e3"></div>
<div style="left:1294px;top:664px;width:2px;height:11px;background:#e2e3e3"></div>
<div style="left:1296px;top:664px;width:10px;height:11px;background:#f8f9fa"></div>
<svg style="position:absolute;left:1268px;top:667px" width="5" height="7" viewBox="0 0 5 7"><path d="M4 0.3 L0.6 3.5 L4 6.7 Z" fill="#b0b3b8"/></svg>
<svg style="position:absolute;left:1285px;top:667px" width="5" height="7" viewBox="0 0 5 7"><path d="M0.6 0.3 L4 3.5 L0.6 6.7 Z" fill="#b0b3b8"/></svg>
<svg style="position:absolute;left:138px;top:685px" width="18" height="18" viewBox="0 0 18 18"><rect x="0" y="0" width="18" height="18" rx="1.5" fill="#7e30d0"/><path d="M7 5 H14 M7 9 H14 M7 13 H14 M3.8 5 H5.2 M3.8 9 H5.2 M3.8 13 H5.2" stroke="#fff" stroke-width="1.6"/></svg>
<svg style="position:absolute;left:577px;top:726px" width="35" height="35" viewBox="0 0 35 35"><circle cx="17.5" cy="17.5" r="17.3" fill="#db4437"/><path d="M17.5 17.5 L2.5 8.85 A17.3 17.3 0 0 0 17.5 34.8 Z" fill="#0f9d58"/><path d="M17.5 17.5 L17.5 34.8 A17.3 17.3 0 0 0 32.5 8.85 Z" fill="#ffcd40"/><path d="M17.5 8.5 H32.5 A17.3 17.3 0 0 0 2.5 8.85 L10 21.8 A8.6 8.6 0 0 1 17.5 8.5 Z" fill="#db4437"/><path d="M2.5 8.85 L10 21.8 A8.6 8.6 0 0 0 22 25 L14.5 34.5 A17.3 17.3 0 0 1 2.5 8.85 Z" fill="#0f9d58"/><path d="M32.5 8.85 H17.5 A8.6 8.6 0 0 1 22 25 L14.5 34.5 A17.3 17.3 0 0 0 32.5 8.85 Z" fill="#ffcd40"/><circle cx="17.5" cy="17.5" r="7.6" fill="#fff"/><circle cx="17.5" cy="17.5" r="6.2" fill="#4285f4"/></svg>
<div style="left:589px;top:764px;width:11px;height:3px;background:#fff;border-radius:1.5px"></div>
<svg style="position:absolute;left:636px;top:726px" width="35" height="35" viewBox="0 0 35 35"><circle cx="17.5" cy="17.5" r="17.3" fill="#fff"/><path d="M8 9 H27 M8 11.5 H27" stroke="#444" stroke-width="1"/><text x="17.5" y="24" font-family="Liberation Sans" font-weight="bold" font-size="10.5" fill="#111" text-anchor="middle">VPS</text><path d="M10 24 Q17 20 25 22" stroke="#3a6ed8" stroke-width="0.8" fill="none"/></svg>
<div style="left:683px;top:732px;width:1px;height:21px;background:#5f6368"></div>
<svg style="position:absolute;left:695px;top:726px" width="35" height="35" viewBox="0 0 35 35"><circle cx="17.5" cy="17.5" r="17.3" fill="#fff"/><path d="M7.2 10.5 H27 V26 H7.2 Z" fill="#e8e8e8"/><path d="M7.2 26 L17.1 17 L27 26 Z" fill="#dcdcdc"/><path d="M5.2 10.2 Q5.2 9 6.4 9 L17.1 17 L27.8 9 Q29 9 29 10.2 V26 H26.8 V12.5 L17.1 19.8 L7.4 12.5 V26 H5.2 Z" fill="#db4437"/></svg>
<div style="left:709px;top:764px;width:7px;height:2px;background:#9aa0a6;border-radius:1px"></div>
<svg style="position:absolute;left:753px;top:726px" width="35" height="35" viewBox="0 0 35 35"><circle cx="17.5" cy="17.5" r="17.3" fill="#4285f4"/><path d="M9 11.3 Q9 10 10.3 10 H15.3 L17.3 12 H24.7 Q26 12 26 13.3 V23.7 Q26 25 24.7 25 H10.3 Q9 25 9 23.7 Z" fill="#fff"/></svg>
<div style="left:767px;top:764px;width:7px;height:2px;background:#9aa0a6;border-radius:1px"></div>
<svg style="position:absolute;left:1196px;top:732px" width="20" height="20" viewBox="0 0 20 20"><g transform="rotate(45 10 10)"><path d="M7.6 5 H12.4 V15 L10 18 L7.6 15 Z" fill="#fff"/><path d="M7.6 1.5 H12.4 V4 H7.6 Z" fill="#fff"/><path d="M7 4.4 H13" stroke="#505154" stroke-width="0.8"/></g></svg>
<svg style="position:absolute;left:1275px;top:734px" width="17" height="14" viewBox="0 0 17 14"><path d="M8.5 13.5 L0.5 4 A12.5 12.5 0 0 1 16.5 4 Z" fill="#e8eaed"/><path d="M0.5 4 A12.5 12.5 0 0 1 16.5 4 L15 5.8 A10 10 0 0 0 2 5.8 Z" fill="#7a7b7e"/></svg>
<svg style="position:absolute;left:1301px;top:734px" width="9" height="16" viewBox="0 0 9 16"><rect x="2.5" y="0" width="4" height="2" fill="#7a7b7e"/><rect x="0" y="2" width="9" height="5" fill="#7a7b7e"/><rect x="0" y="7" width="9" height="9" fill="#e8eaed"/></svg>
</body></html>
